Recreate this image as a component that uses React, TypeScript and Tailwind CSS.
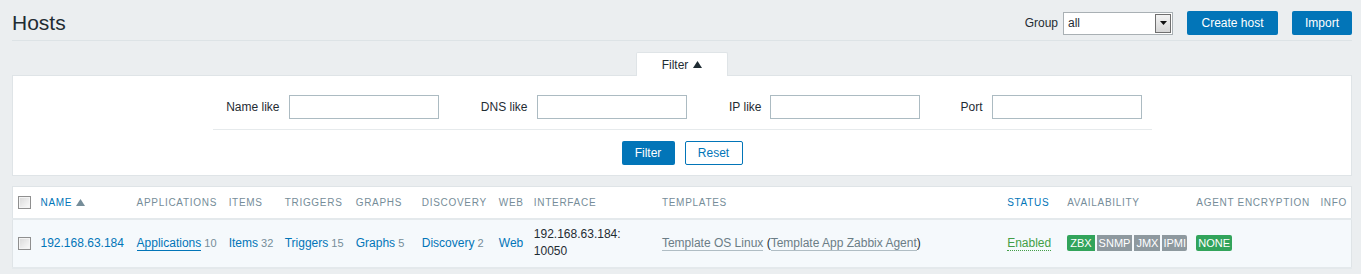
import React from "react";

const font = { fontFamily: '"Liberation Sans", Arial, sans-serif' };

function Checkbox() {
  return (
    <span className="block w-[13px] h-[13px] border border-[#8f8f8f] bg-gradient-to-br from-[#d9d9d9] to-[#fbfbfb] shadow-[inset_0_0_0_1px_#f4f4f4]" />
  );
}

function Count({ n }: { n: number }) {
  return <span className="text-[11px] text-[#768d99]"> {n}</span>;
}

const cols = [
  { label: "", w: "w-[23px]" },
  { label: "NAME", w: "w-[96px]", sort: true },
  { label: "APPLICATIONS", w: "w-[92px]" },
  { label: "ITEMS", w: "w-[56px]" },
  { label: "TRIGGERS", w: "w-[71px]" },
  { label: "GRAPHS", w: "w-[66px]" },
  { label: "DISCOVERY", w: "w-[77px]" },
  { label: "WEB", w: "w-[35px]" },
  { label: "INTERFACE", w: "w-[128px]" },
  { label: "TEMPLATES", w: "w-[345px]" },
  { label: "STATUS", w: "w-[60px]", link: true },
  { label: "AVAILABILITY", w: "w-[129px]" },
  { label: "AGENT ENCRYPTION", w: "w-[124px]" },
  { label: "INFO", w: "w-[36px]" },
];

export default function App() {
  return (
    <div
      className="min-h-[274px] bg-[#ebeef0] pl-[12px] pr-[9px] text-[12px] text-[#1f2c33]"
      style={font}
    >
      {/* header */}
      <div className="flex h-[41px] items-start justify-between border-b border-[#dde3e6] pt-[11px]">
        <h1 className="text-[21px] leading-[24px]">Hosts</h1>
        <div className="flex items-center">
          <span className="mr-[4px]">Group</span>
          <div className="ml-[1px] flex h-[23px] w-[110px] items-center border border-[#a9b0b4] bg-white">
            <span className="flex-1 pl-[4px]">all</span>
            <span className="mr-[1px] flex h-[19px] w-[16px] items-center justify-center border border-[#6f6f6f] bg-gradient-to-b from-[#f3f3f3] to-[#d6d6d6]">
              <svg width="7" height="4" viewBox="0 0 7 4">
                <path d="M0 0h7L3.5 4z" fill="#111" />
              </svg>
            </span>
          </div>
          <button className="ml-[14px] h-[24px] w-[91px] rounded-[2px] bg-[#0275b8] text-[12px] text-white">
            Create host
          </button>
          <button className="ml-[14px] h-[24px] w-[60px] rounded-[2px] bg-[#0275b8] text-[12px] text-white">
            Import
          </button>
        </div>
      </div>

      {/* filter tab */}
      <div className="mt-[11px] flex justify-center">
        <div className="relative -mb-px flex h-[24px] w-[92px] items-center justify-center gap-[5px] rounded-t-[2px] border border-b-0 border-[#dfe4e7] bg-white">
          <span>Filter</span>
          <svg width="9" height="7" viewBox="0 0 9 7">
            <path d="M4.5 0L9 7H0z" fill="#1f2c33" />
          </svg>
        </div>
      </div>

      {/* filter panel */}
      <div className="border border-[#dfe4e7] bg-white pt-[19px] pb-[10px]">
        <div className="mx-auto w-[939px] border-b border-[#e6eaec] pb-[10px]">
          <div className="flex items-center">
            <label className="w-[67px] text-right">Name like</label>
            <input className="ml-[9px] h-[24px] w-[150px] border border-[#acbbc2]" />
            <label className="w-[89px] text-right">DNS like</label>
            <input className="ml-[9px] h-[24px] w-[150px] border border-[#acbbc2]" />
            <label className="w-[75px] text-right">IP like</label>
            <input className="ml-[8px] h-[24px] w-[150px] border border-[#acbbc2]" />
            <label className="w-[63px] text-right">Port</label>
            <input className="ml-[9px] h-[24px] w-[150px] border border-[#acbbc2]" />
          </div>
        </div>
        <div className="mt-[11px] flex justify-center gap-[10px]">
          <button className="h-[24px] w-[53px] rounded-[2px] bg-[#0275b8] text-[12px] text-white">
            Filter
          </button>
          <button className="h-[24px] w-[58px] rounded-[2px] border border-[#0275b8] bg-white text-[12px] text-[#0275b8]">
            Reset
          </button>
        </div>
      </div>

      {/* hosts table */}
      <table className="mt-[10px] w-full table-fixed border border-[#dfe4e7] bg-white">
        <colgroup>
          {cols.map((c, i) => (
            <col key={i} className={c.w} />
          ))}
        </colgroup>
        <thead>
          <tr className="h-[32px] border-b-2 border-[#e4e9ec]">
            {cols.map((c, i) => (
              <th
                key={i}
                className={`px-[5px] text-left align-middle text-[10px] font-normal tracking-[0.7px] whitespace-nowrap ${
                  c.sort || c.link ? "text-[#0275b8]" : "text-[#768d99]"
                }`}
              >
                {i === 0 ? (
                  <Checkbox />
                ) : (
                  <>
                    {c.label}
                    {c.sort && (
                      <svg className="ml-[4px] inline-block align-[0px]" width="9" height="7" viewBox="0 0 9 7">
                        <path d="M4.5 0L9 7H0z" fill="#768d99" />
                      </svg>
                    )}
                  </>
                )}
              </th>
            ))}
          </tr>
        </thead>
        <tbody>
          <tr className="h-[49px] border-b-2 border-[#e4e9ec] bg-[#f5f9fc] whitespace-nowrap">
            <td className="px-[5px] align-middle">
              <Checkbox />
            </td>
            <td className="px-[5px] text-[#0275b8]">192.168.63.184</td>
            <td className="px-[5px]">
              <span className="border-b border-[#0275b8] text-[#0275b8]">Applications</span>
              <Count n={10} />
            </td>
            <td className="px-[5px]">
              <span className="text-[#0275b8]">Items</span>
              <Count n={32} />
            </td>
            <td className="px-[5px]">
              <span className="text-[#0275b8]">Triggers</span>
              <Count n={15} />
            </td>
            <td className="px-[5px]">
              <span className="text-[#0275b8]">Graphs</span>
              <Count n={5} />
            </td>
            <td className="px-[5px]">
              <span className="text-[#0275b8]">Discovery</span>
              <Count n={2} />
            </td>
            <td className="px-[5px] text-[#0275b8]">Web</td>
            <td className="px-[5px] leading-[17px]">
              192.168.63.184:
              <br />
              10050
            </td>
            <td className="px-[5px]">
              <span className="border-b border-[#b0bdc4] text-[#6b7d86]">Template OS Linux</span>{" "}
              (<span className="border-b border-[#b0bdc4] text-[#6b7d86]">Template App Zabbix Agent</span>)
            </td>
            <td className="px-[5px]">
              <span className="border-b border-dotted border-[#429e47] text-[#429e47]">Enabled</span>
            </td>
            <td className="px-[5px]">
              <div className="flex gap-[2px] text-[11px] leading-[16px] text-white">
                <span className="rounded-l-[2px] bg-[#32a45b] px-[3px]">ZBX</span>
                <span className="bg-[#8e999f] px-[2px]">SNMP</span>
                <span className="bg-[#8e999f] px-[2px]">JMX</span>
                <span className="rounded-r-[2px] bg-[#8e999f] px-[1px]">IPMI</span>
              </div>
            </td>
            <td className="px-[5px]">
              <span className="inline-block rounded-[2px] bg-[#32a45b] px-[2px] text-[11px] leading-[16px] text-white">
                NONE
              </span>
            </td>
            <td className="px-[5px]" />
          </tr>
        </tbody>
      </table>
    </div>
  );
}
